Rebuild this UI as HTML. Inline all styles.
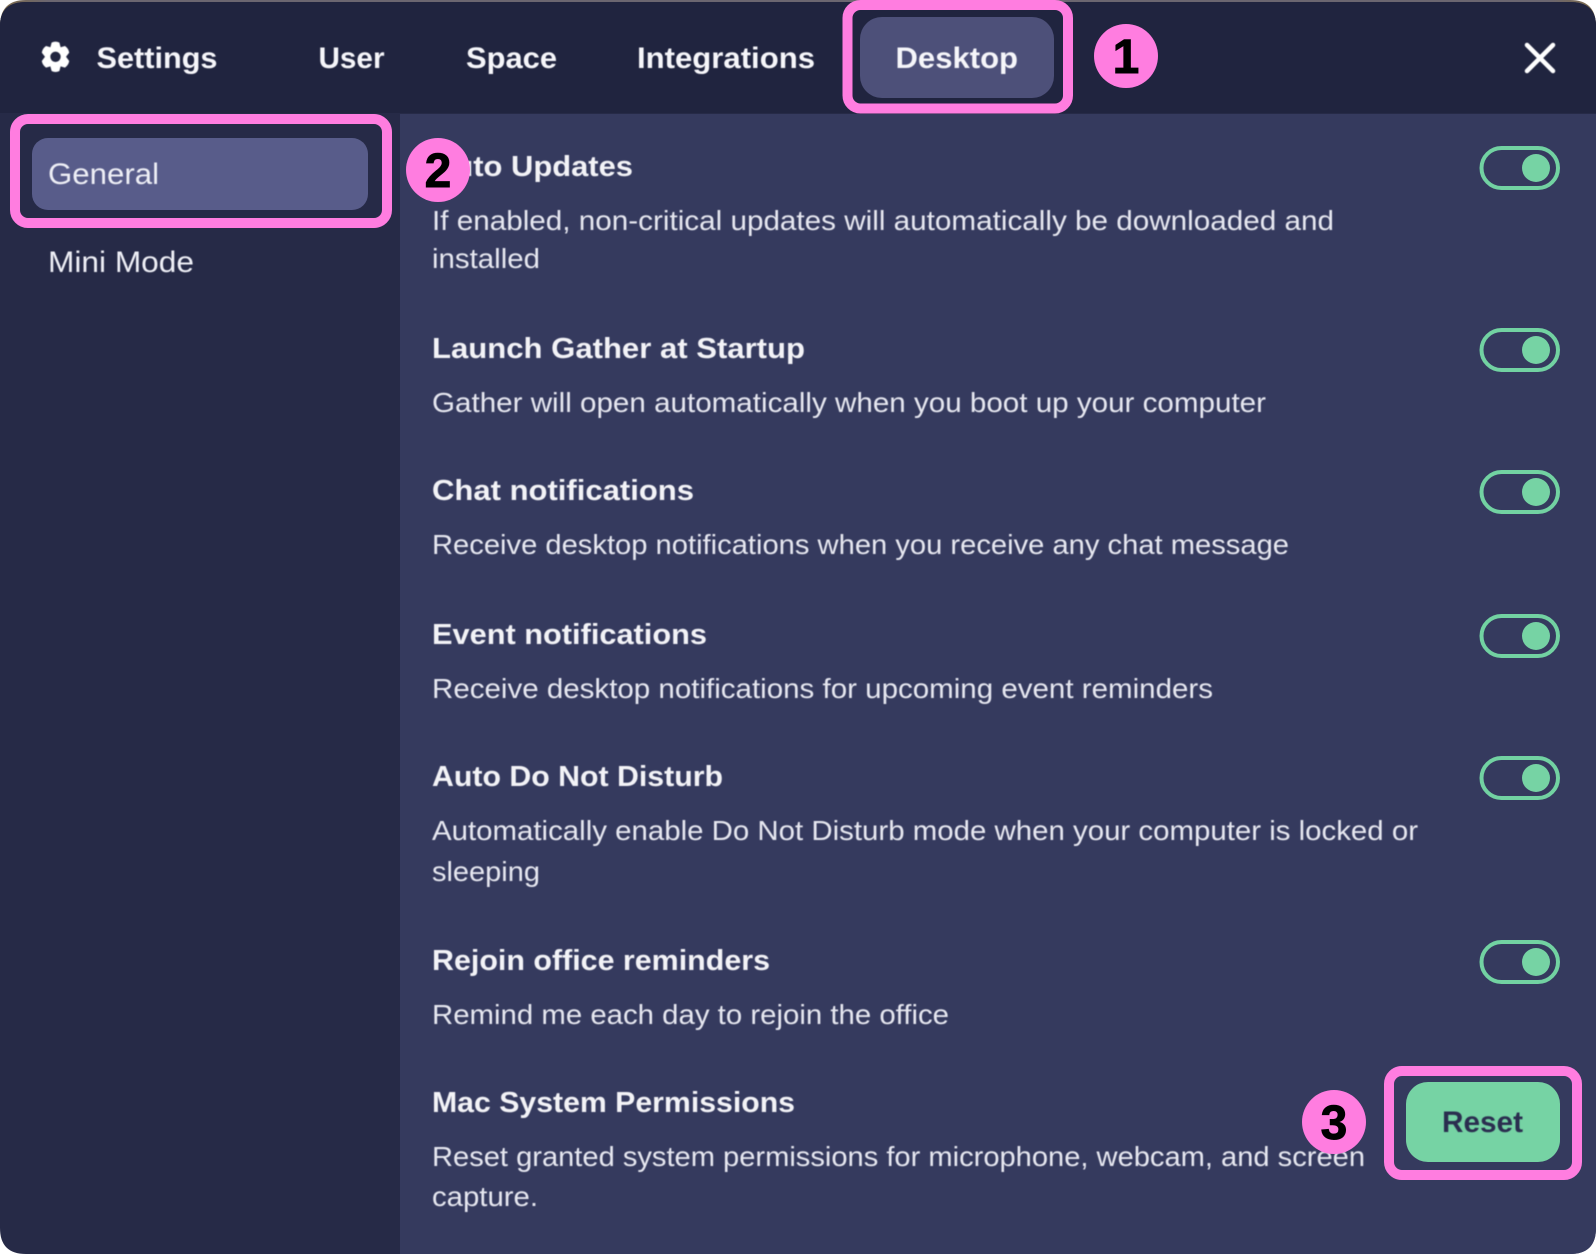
<!DOCTYPE html>
<html lang="en">
<head>
<meta charset="utf-8">
<title>Settings</title>
<style>
html,body{margin:0;padding:0;background:#fff;width:1596px;height:1254px;overflow:hidden}
svg{display:block}
text{font-family:"Liberation Sans",sans-serif}
.t{font-weight:700;font-size:29px;fill:#f3f3f7}
.d{font-size:27.5px;fill:#e6e7f0}
.n{font-weight:700;font-size:30px;fill:#f6f6fa}
.s{font-size:30px;fill:#eeeff6}
.c{font-weight:700;font-size:48px;fill:#000;stroke:#000;stroke-width:.9;text-anchor:middle}
.soft{filter:url(#b)}
</style>
</head>
<body>
<svg width="1596" height="1254" viewBox="0 0 1596 1254" xmlns="http://www.w3.org/2000/svg">
<defs>
<filter id="b" x="-2%" y="-2%" width="104%" height="104%"><feGaussianBlur stdDeviation="0.55"/></filter>
<linearGradient id="top" x1="0" y1="0" x2="1" y2="0">
<stop offset="0" stop-color="#7d6a48"/><stop offset=".03" stop-color="#6b6670"/><stop offset=".97" stop-color="#6b6670"/><stop offset="1" stop-color="#7d6a48"/>
</linearGradient>
</defs>
<rect width="1596" height="1254" fill="#fff"/>
<path d="M0 40V26Q0 0 26 0H1570Q1596 0 1596 26V40Z" fill="url(#top)"/>
<path d="M0 1228V26Q0 2 26 2H1570Q1596 2 1596 26V1228Q1596 1254 1570 1254H26Q0 1254 0 1228Z" fill="#262a47"/>
<path d="M0 113V26Q0 2 26 2H1570Q1596 2 1596 26V113Z" fill="#20243f"/>
<path d="M400 114H1596V1228Q1596 1254 1570 1254H400Z" fill="#353a5e"/>

<rect x="860" y="17" width="194" height="81" rx="22" fill="#4d5079"/>
<rect x="32" y="138" width="336" height="72" rx="16" fill="#585c8a"/>

<g class="soft">
<!-- gear -->
<path fill="#fff" fill-rule="evenodd" d="M51.6 42.6Q55.5 40.6 59.4 42.6L60.6 47.2L65 46Q68.6 48.6 69.2 52.6L66 56.8L69.2 61Q68.6 65 65 67.6L60.6 66.4L59.4 71Q55.5 73 51.6 71L50.4 66.4L46 67.6Q42.4 65 41.8 61L45 56.8L41.8 52.6Q42.4 48.6 46 46L50.4 47.2ZM55.5 51.6A5.2 5.2 0 1 0 55.5 62A5.2 5.2 0 1 0 55.5 51.6Z"/>
<text class="n" x="96.5" y="68" textLength="121" lengthAdjust="spacingAndGlyphs">Settings</text>
<text class="n" x="318.5" y="68" textLength="66" lengthAdjust="spacingAndGlyphs">User</text>
<text class="n" x="466" y="68" textLength="91" lengthAdjust="spacingAndGlyphs">Space</text>
<text class="n" x="637" y="68" textLength="178" lengthAdjust="spacingAndGlyphs">Integrations</text>
<text class="n" x="895.5" y="68" textLength="122.5" lengthAdjust="spacingAndGlyphs">Desktop</text>
<path d="M1527 45L1553 71M1553 45L1527 71" stroke="#fff" stroke-width="4.5" stroke-linecap="round" fill="none"/>

<text class="s" x="48" y="184" textLength="111" lengthAdjust="spacingAndGlyphs">General</text>
<text class="s" x="48" y="272" textLength="146" lengthAdjust="spacingAndGlyphs">Mini Mode</text>

<text class="t" x="432" y="176" textLength="201" lengthAdjust="spacingAndGlyphs">Auto Updates</text>
<text class="d" x="432" y="230" textLength="902" lengthAdjust="spacingAndGlyphs">If enabled, non-critical updates will automatically be downloaded and</text>
<text class="d" x="432" y="268" textLength="108" lengthAdjust="spacingAndGlyphs">installed</text>

<text class="t" x="432" y="358" textLength="373" lengthAdjust="spacingAndGlyphs">Launch Gather at Startup</text>
<text class="d" x="432" y="412" textLength="834" lengthAdjust="spacingAndGlyphs">Gather will open automatically when you boot up your computer</text>

<text class="t" x="432" y="500" textLength="262" lengthAdjust="spacingAndGlyphs">Chat notifications</text>
<text class="d" x="432" y="554" textLength="857" lengthAdjust="spacingAndGlyphs">Receive desktop notifications when you receive any chat message</text>

<text class="t" x="432" y="644" textLength="275" lengthAdjust="spacingAndGlyphs">Event notifications</text>
<text class="d" x="432" y="698" textLength="781" lengthAdjust="spacingAndGlyphs">Receive desktop notifications for upcoming event reminders</text>

<text class="t" x="432" y="786" textLength="291" lengthAdjust="spacingAndGlyphs">Auto Do Not Disturb</text>
<text class="d" x="432" y="840" textLength="986" lengthAdjust="spacingAndGlyphs">Automatically enable Do Not Disturb mode when your computer is locked or</text>
<text class="d" x="432" y="881" textLength="108" lengthAdjust="spacingAndGlyphs">sleeping</text>

<text class="t" x="432" y="970" textLength="338" lengthAdjust="spacingAndGlyphs">Rejoin office reminders</text>
<text class="d" x="432" y="1024" textLength="517" lengthAdjust="spacingAndGlyphs">Remind me each day to rejoin the office</text>

<text class="t" x="432" y="1112" textLength="363" lengthAdjust="spacingAndGlyphs">Mac System Permissions</text>
<text class="d" x="432" y="1166" textLength="933" lengthAdjust="spacingAndGlyphs">Reset granted system permissions for microphone, webcam, and screen</text>
<text class="d" x="432" y="1206" textLength="106" lengthAdjust="spacingAndGlyphs">capture.</text>
</g>

<!-- toggles -->
<g fill="none" stroke="#72d2a2" stroke-width="4">
<rect x="1481.5" y="148" width="76.5" height="40" rx="20"/>
<rect x="1481.5" y="330" width="76.5" height="40" rx="20"/>
<rect x="1481.5" y="472" width="76.5" height="40" rx="20"/>
<rect x="1481.5" y="616" width="76.5" height="40" rx="20"/>
<rect x="1481.5" y="758" width="76.5" height="40" rx="20"/>
<rect x="1481.5" y="942" width="76.5" height="40" rx="20"/>
</g>
<g fill="#76d3a4">
<circle cx="1536" cy="168" r="14"/>
<circle cx="1536" cy="350" r="14"/>
<circle cx="1536" cy="492" r="14"/>
<circle cx="1536" cy="636" r="14"/>
<circle cx="1536" cy="778" r="14"/>
<circle cx="1536" cy="962" r="14"/>
</g>

<!-- reset button -->
<rect x="1406" y="1082" width="154" height="80" rx="22" fill="#76d3a4"/>
<text class="soft" x="1442" y="1132" font-size="30" font-weight="700" fill="#2b2f50" textLength="81" lengthAdjust="spacingAndGlyphs">Reset</text>

<!-- pink annotations -->
<g fill="none" stroke="#ff7de0" stroke-width="10">
<rect x="847.5" y="5" width="220.5" height="103.5" rx="13"/>
<rect x="15" y="119" width="372" height="104" rx="13"/>
<rect x="1389" y="1071" width="188" height="104" rx="13"/>
</g>
<g fill="#ff7de0">
<circle cx="1126" cy="56" r="32"/>
<circle cx="438" cy="170" r="32"/>
<circle cx="1334" cy="1122" r="32"/>
</g>
<text class="c" x="1126" y="73">1</text>
<text class="c" x="438" y="187">2</text>
<text class="c" x="1334" y="1139">3</text>
</svg>
</body>
</html>
